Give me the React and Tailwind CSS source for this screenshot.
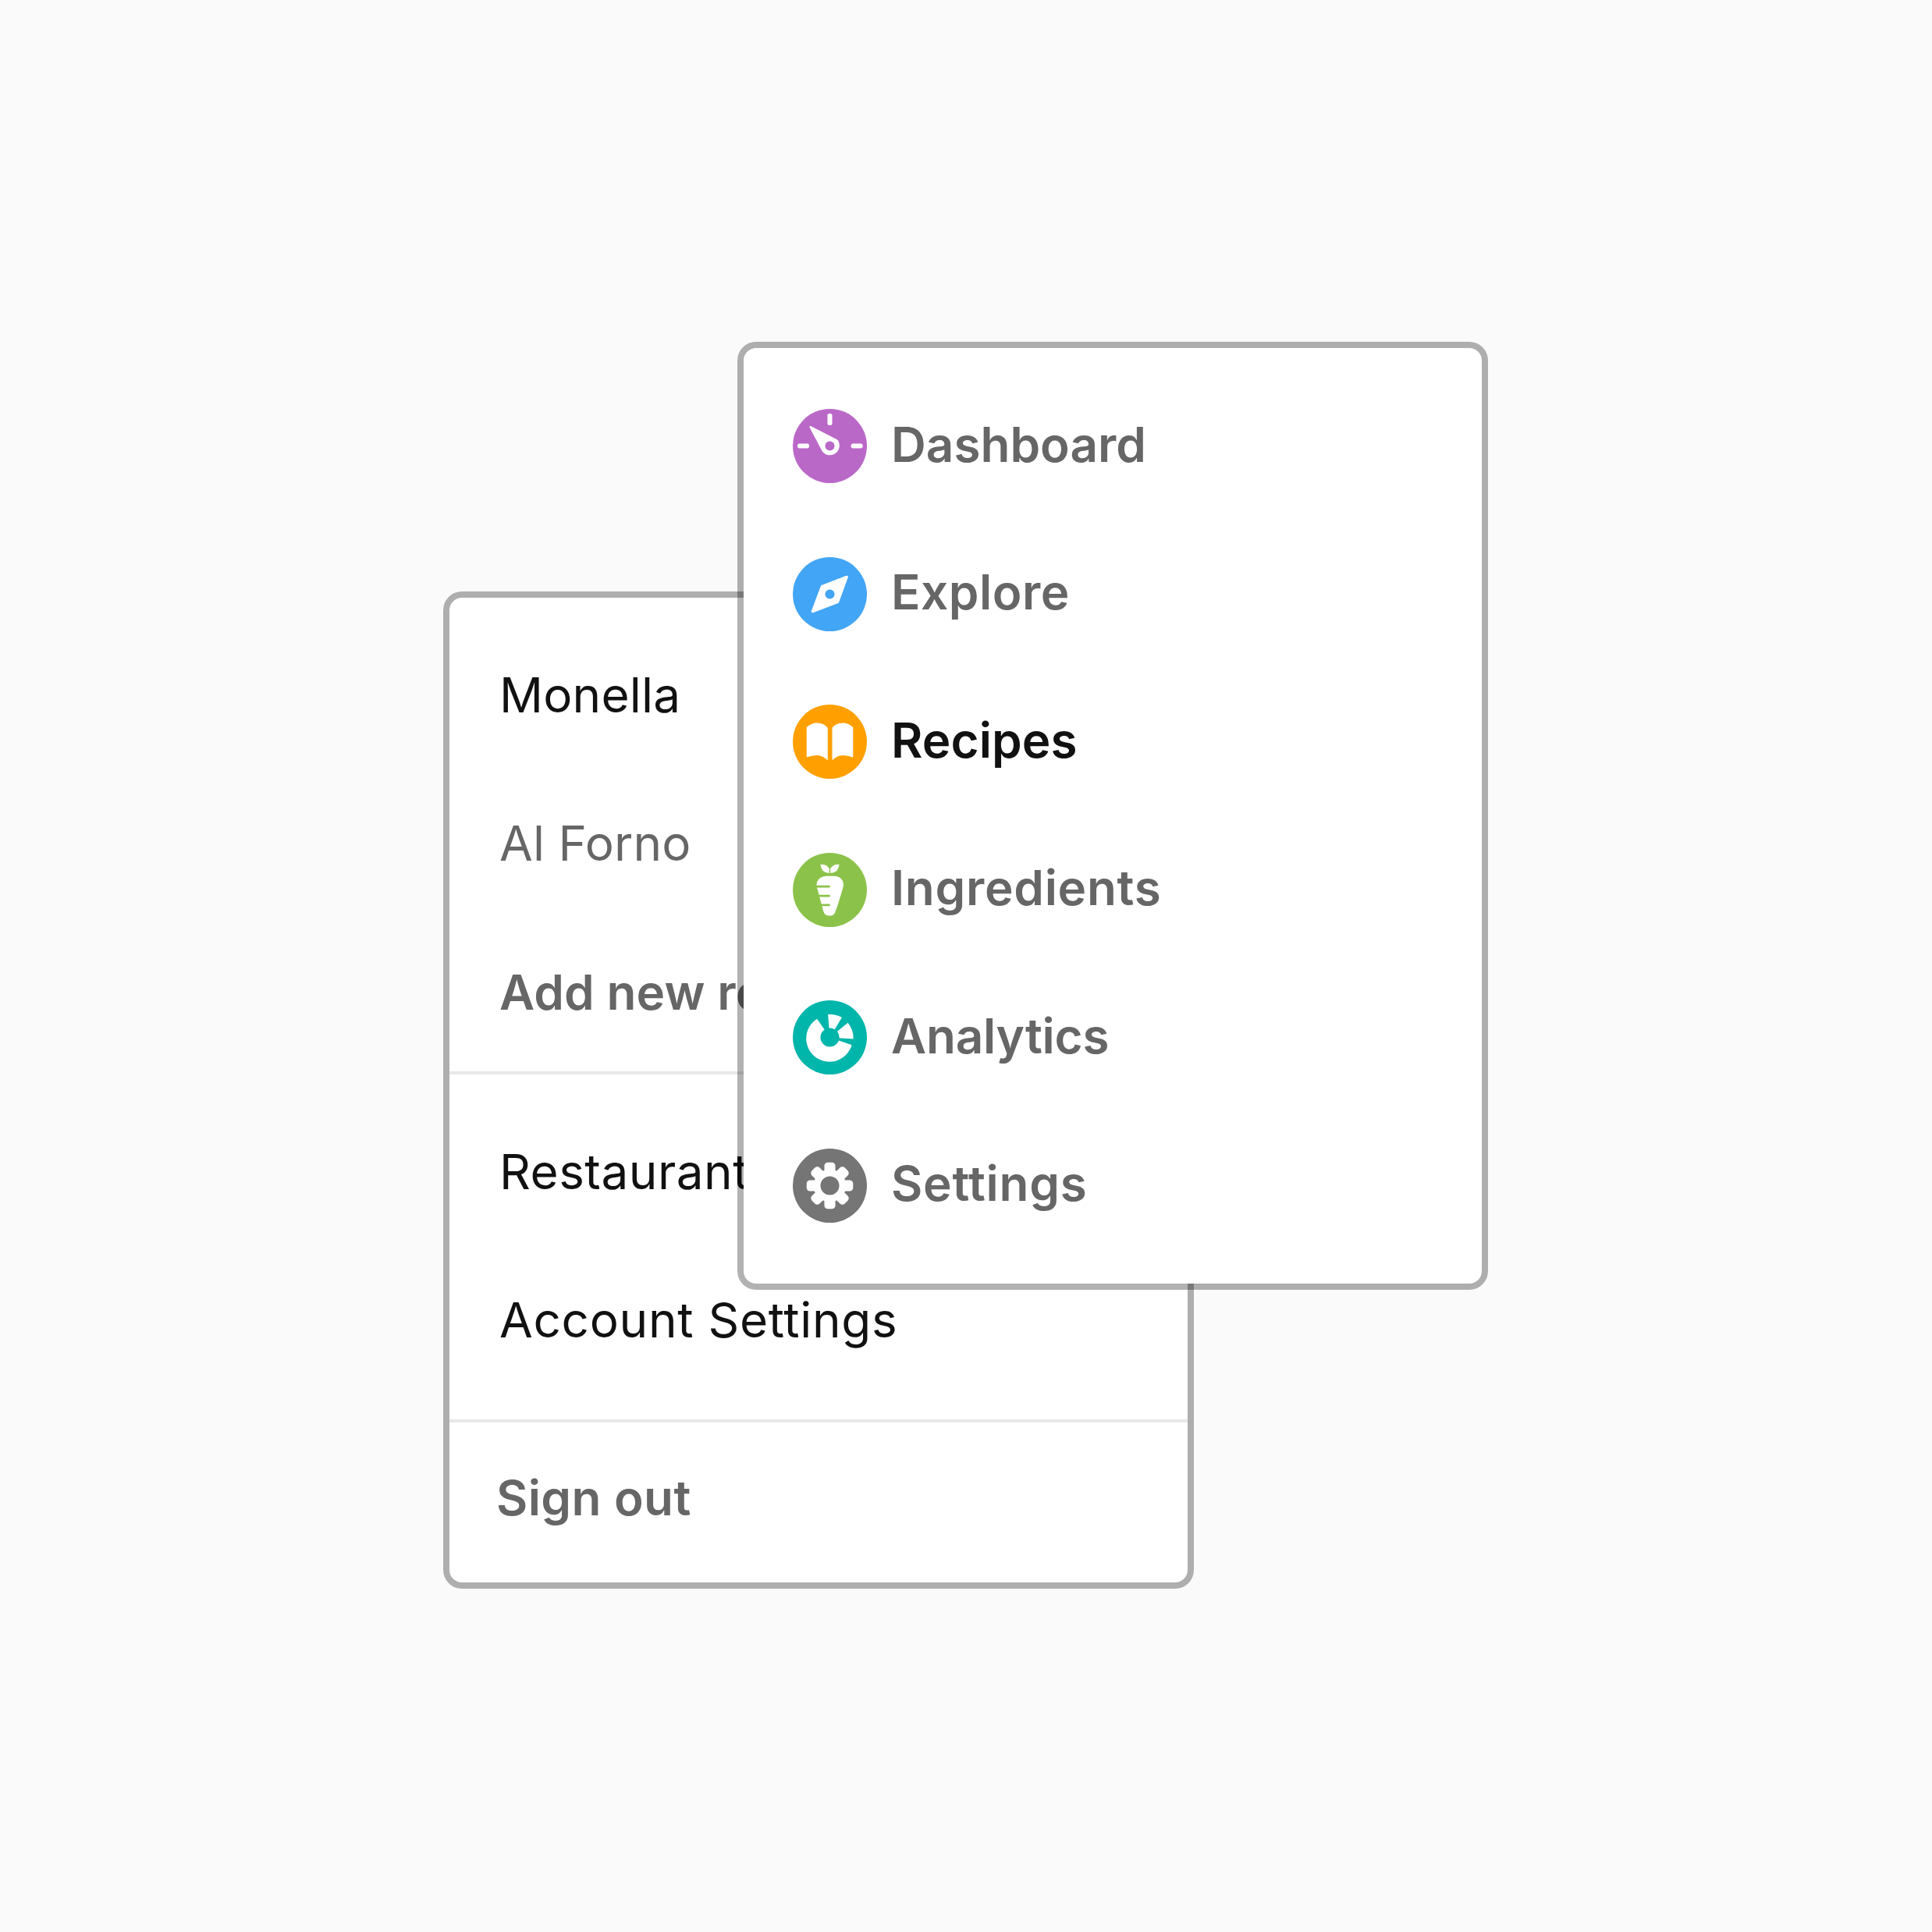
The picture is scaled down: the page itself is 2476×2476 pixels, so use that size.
import React from "react";

function Dashboard() {
  return (
    <svg viewBox="0 0 284 284" className="w-[95px] h-[95px] shrink-0">
      <circle cx="142" cy="142" r="142" fill="#BA68C8" />
      <g fill="#fff">
        <rect x="133" y="18" width="18" height="45" rx="8" />
        <rect x="18" y="133" width="45" height="18" rx="8" />
        <rect x="223" y="133" width="45" height="18" rx="8" />
        <path d="M64 70 Q63 64 69 66 L171 118 A36 36 0 1 1 113 163 Z" />
      </g>
      <circle cx="142" cy="142" r="18" fill="#BA68C8" />
    </svg>
  );
}

function Explore() {
  return (
    <svg viewBox="0 0 284 284" className="w-[95px] h-[95px] shrink-0">
      <circle cx="142" cy="142" r="142" fill="#42A5F5" />
      <path d="M207 76 L172 172 L76 208 L112 112 Z" fill="#fff" stroke="#fff" strokeWidth="10" strokeLinejoin="round" />
      <circle cx="142" cy="142" r="18" fill="#42A5F5" />
    </svg>
  );
}

function Recipes() {
  return (
    <svg viewBox="0 0 284 284" className="w-[95px] h-[95px] shrink-0">
      <circle cx="142" cy="142" r="142" fill="#FFA000" />
      <g fill="#fff">
        <path d="M53 87 Q70 70 93 70 Q118 70 134 89 V214 Q115 194 93 194 Q72 194 53 202 Z" />
        <path d="M231 87 Q214 70 191 70 Q166 70 151 89 V214 Q169 194 191 194 Q212 194 231 202 Z" />
      </g>
    </svg>
  );
}

function Ingredients() {
  return (
    <svg viewBox="0 0 284 284" className="w-[95px] h-[95px] shrink-0">
      <circle cx="142" cy="142" r="142" fill="#8BC34A" />
      <g fill="#fff">
        <path d="M106 44 Q128 42 140 60 V78 Q108 76 106 44 Z" />
        <path d="M178 44 Q156 42 144 60 V78 Q176 76 178 44 Z" />
        <path d="M91 124 C91 104 108 89 128 89 H160 C182 89 196 106 194 126 C192 136 170 210 163 226 C158 240 150 241 141 241 C130 241 122 238 118 226 L92 130 Z" />
      </g>
      <g fill="#8BC34A">
        <rect x="80" y="125" width="63" height="8" rx="4" />
        <rect x="80" y="161" width="63" height="8" rx="4" />
        <rect x="80" y="196" width="63" height="8" rx="4" />
      </g>
    </svg>
  );
}

function Analytics() {
  return (
    <svg viewBox="0 0 284 284" className="w-[95px] h-[95px] shrink-0">
      <circle cx="142" cy="142" r="142" fill="#00B5AA" />
      <g fill="#fff">
        <path d="M93 71 A89 89 0 1 0 226 171 L142 142 Z" />
        <path d="M135 54 A89 89 0 0 1 188 66 L142 142 Z" />
        <path d="M211 86 A89 89 0 0 1 232 148 L142 142 Z" />
      </g>
      <circle cx="142" cy="142" r="36" fill="#00B5AA" />
    </svg>
  );
}

function Settings() {
  return (
    <svg viewBox="0 0 284 284" className="w-[95px] h-[95px] shrink-0">
      <circle cx="142" cy="142" r="142" fill="#757575" />
      <g fill="#fff">
        <circle cx="142" cy="142" r="62" />
        {[0, 45, 90, 135, 180, 225, 270, 315].map((a) => (
          <rect key={a} x="121" y="53" width="42" height="60" rx="13" transform={`rotate(${a} 142 142)`} />
        ))}
      </g>
      <circle cx="142" cy="142" r="36" fill="#757575" />
    </svg>
  );
}

const nav = [
  { label: "Dashboard", Icon: Dashboard, cls: "text-[#666666] tracking-[0px]" },
  { label: "Explore", Icon: Explore, cls: "text-[#666666] tracking-[0.5px]" },
  { label: "Recipes", Icon: Recipes, cls: "text-[#111111] tracking-[0.1px]" },
  { label: "Ingredients", Icon: Ingredients, cls: "text-[#666666] tracking-[0.7px]" },
  { label: "Analytics", Icon: Analytics, cls: "text-[#666666] tracking-[-0.2px]" },
  { label: "Settings", Icon: Settings, cls: "text-[#666666] tracking-[0.7px]" },
];

export default function App() {
  return (
    <div className="w-[2476px] h-[2476px] bg-[#fafafa] flex items-start pl-[568px] font-['Inter',sans-serif] overflow-hidden">
      <div className="shrink-0 w-[962px] h-[1278px] mt-[758px] bg-white bg-clip-padding border-[8px] border-black/30 rounded-[24px] flex flex-col text-[62px]">
        <div className="pt-[29px] pl-[64px] flex flex-col">
          <div className="h-[190px] flex items-center text-[#111111] tracking-[0.2px]">Monella</div>
          <div className="h-[190px] flex items-center text-[#666666] tracking-[0.1px]">Al Forno</div>
          <div className="h-[198px] flex items-center font-semibold text-[#666666] pb-[5px] tracking-[0.1px]">Add new restaurant</div>
        </div>
        <div className="h-[4px] bg-[#e8e8e8]" />
        <div className="pt-[29px] pl-[64px] flex flex-col text-[#111111]">
          <div className="h-[190px] flex items-center tracking-[0.5px]">Restaurant Settings</div>
          <div className="h-[190px] flex items-center tracking-[0.7px]">Account Settings</div>
        </div>
        <div className="mt-[33px] h-[4px] bg-[#e8e8e8]" />
        <div className="flex-1 pl-[60px] pb-[13px] flex items-center font-semibold text-[#666666] tracking-[0.4px]">Sign out</div>
      </div>
      <div className="shrink-0 w-[962px] h-[1215px] mt-[438px] ml-[-585px] bg-white bg-clip-padding border-[8px] border-black/30 rounded-[24px] pt-[31px] pl-[63px] flex flex-col text-[62px] font-semibold">
        {nav.map(({ label, Icon, cls }) => (
          <div key={label} className="h-[189.5px] flex items-center gap-[31px]">
            <Icon />
            <span className={`pb-[5px] ${cls}`}>{label}</span>
          </div>
        ))}
      </div>
    </div>
  );
}
